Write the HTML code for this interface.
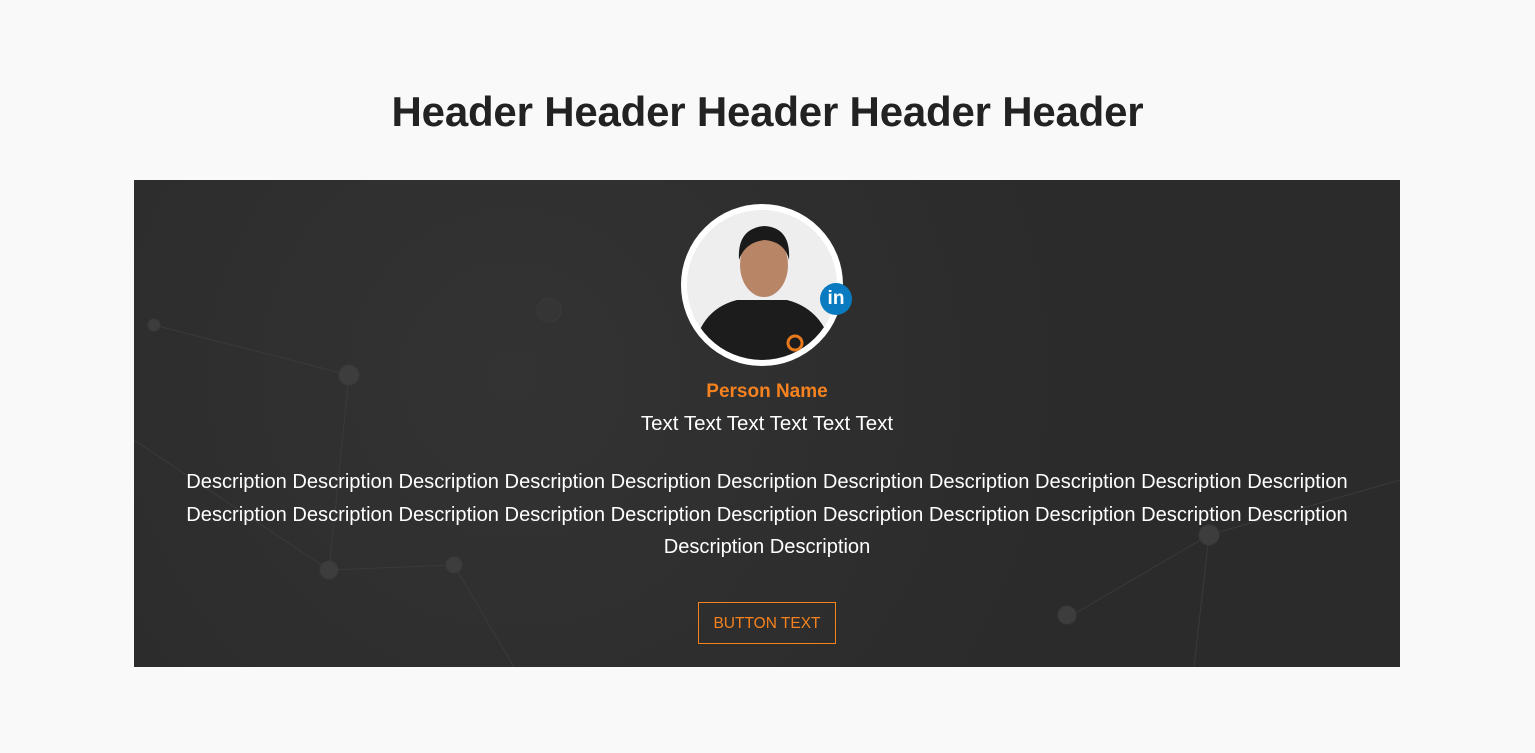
<!DOCTYPE html>
<html><head><meta charset="utf-8"><style>
body{margin:0;background:#f9f9f9;font-family:"Liberation Sans",sans-serif;width:1535px;height:753px;overflow:hidden;position:relative}
h1{position:absolute;top:88px;left:0;width:1535px;text-align:center;margin:0;font-size:42px;font-weight:bold;color:#222;letter-spacing:-0.2px}
.card{position:absolute;left:134px;top:180px;width:1266px;height:487px;background:radial-gradient(circle at 30% 40%,#333 0,#2b2b2b 60%);overflow:hidden}
.av{position:absolute;left:547px;top:24px;width:150px;height:150px;border:6px solid #fff;border-radius:50%;background:#eee;overflow:hidden}
.li{position:absolute;left:686px;top:103px;width:32px;height:32px;border-radius:50%;background:#0a7bc0;color:#fff;font-weight:bold;font-size:19px;text-align:center;line-height:32px}
.t{position:absolute;left:0;width:1266px;text-align:center;color:#fff}
.btn{position:absolute;left:564px;top:422px;width:136px;height:40px;border:1px solid #f5821f;color:#f5821f;font-size:15.5px;text-align:center;line-height:42px}
</style></head><body>
<h1>Header Header Header Header Header</h1>
<div class="card">
<svg width="1266" height="487" style="position:absolute;left:0;top:0" stroke="#3a3a3a" fill="#3d3d3d">
<line x1="20" y1="145" x2="215" y2="195"/><line x1="215" y1="195" x2="195" y2="390"/><line x1="195" y1="390" x2="320" y2="385"/><line x1="320" y1="385" x2="380" y2="487"/><line x1="0" y1="260" x2="195" y2="390"/><line x1="1075" y1="355" x2="1266" y2="300"/><line x1="1075" y1="355" x2="1060" y2="487"/><line x1="930" y1="440" x2="1075" y2="355"/>
<circle cx="215" cy="195" r="10"/><circle cx="195" cy="390" r="9"/><circle cx="320" cy="385" r="8"/><circle cx="1075" cy="355" r="10"/><circle cx="933" cy="435" r="9"/><circle cx="20" cy="145" r="6"/><circle cx="415" cy="130" r="12" fill="#353535"/>
</svg>
<div class="av"><svg width="150" height="150" viewBox="0 0 150 150">
<rect width="150" height="150" fill="#eeeeee"/>
<path d="M5 150 Q10 100 50 90 L100 90 Q140 100 148 150Z" fill="#1c1c1c"/>
<ellipse cx="77" cy="55" rx="24" ry="32" fill="#b88566"/>
<path d="M52 50 Q50 18 78 16 Q104 18 102 50 Q98 32 78 30 Q58 32 52 50Z" fill="#1a1a1a"/>
<circle cx="108" cy="133" r="7" fill="none" stroke="#e87a1e" stroke-width="3"/>
</svg></div>
<div class="li">in</div>
<div class="t" style="top:201px;font-size:19px;font-weight:bold;color:#f5821f">Person Name</div>
<div class="t" style="top:232px;font-size:20.5px">Text Text Text Text Text Text</div>
<div class="t" style="top:286px;font-size:20.1px;line-height:32.5px;white-space:nowrap">Description Description Description Description Description Description Description Description Description Description Description<br>Description Description Description Description Description Description Description Description Description Description Description<br>Description Description</div>
<div class="btn">BUTTON TEXT</div>
</div>
</body></html>
